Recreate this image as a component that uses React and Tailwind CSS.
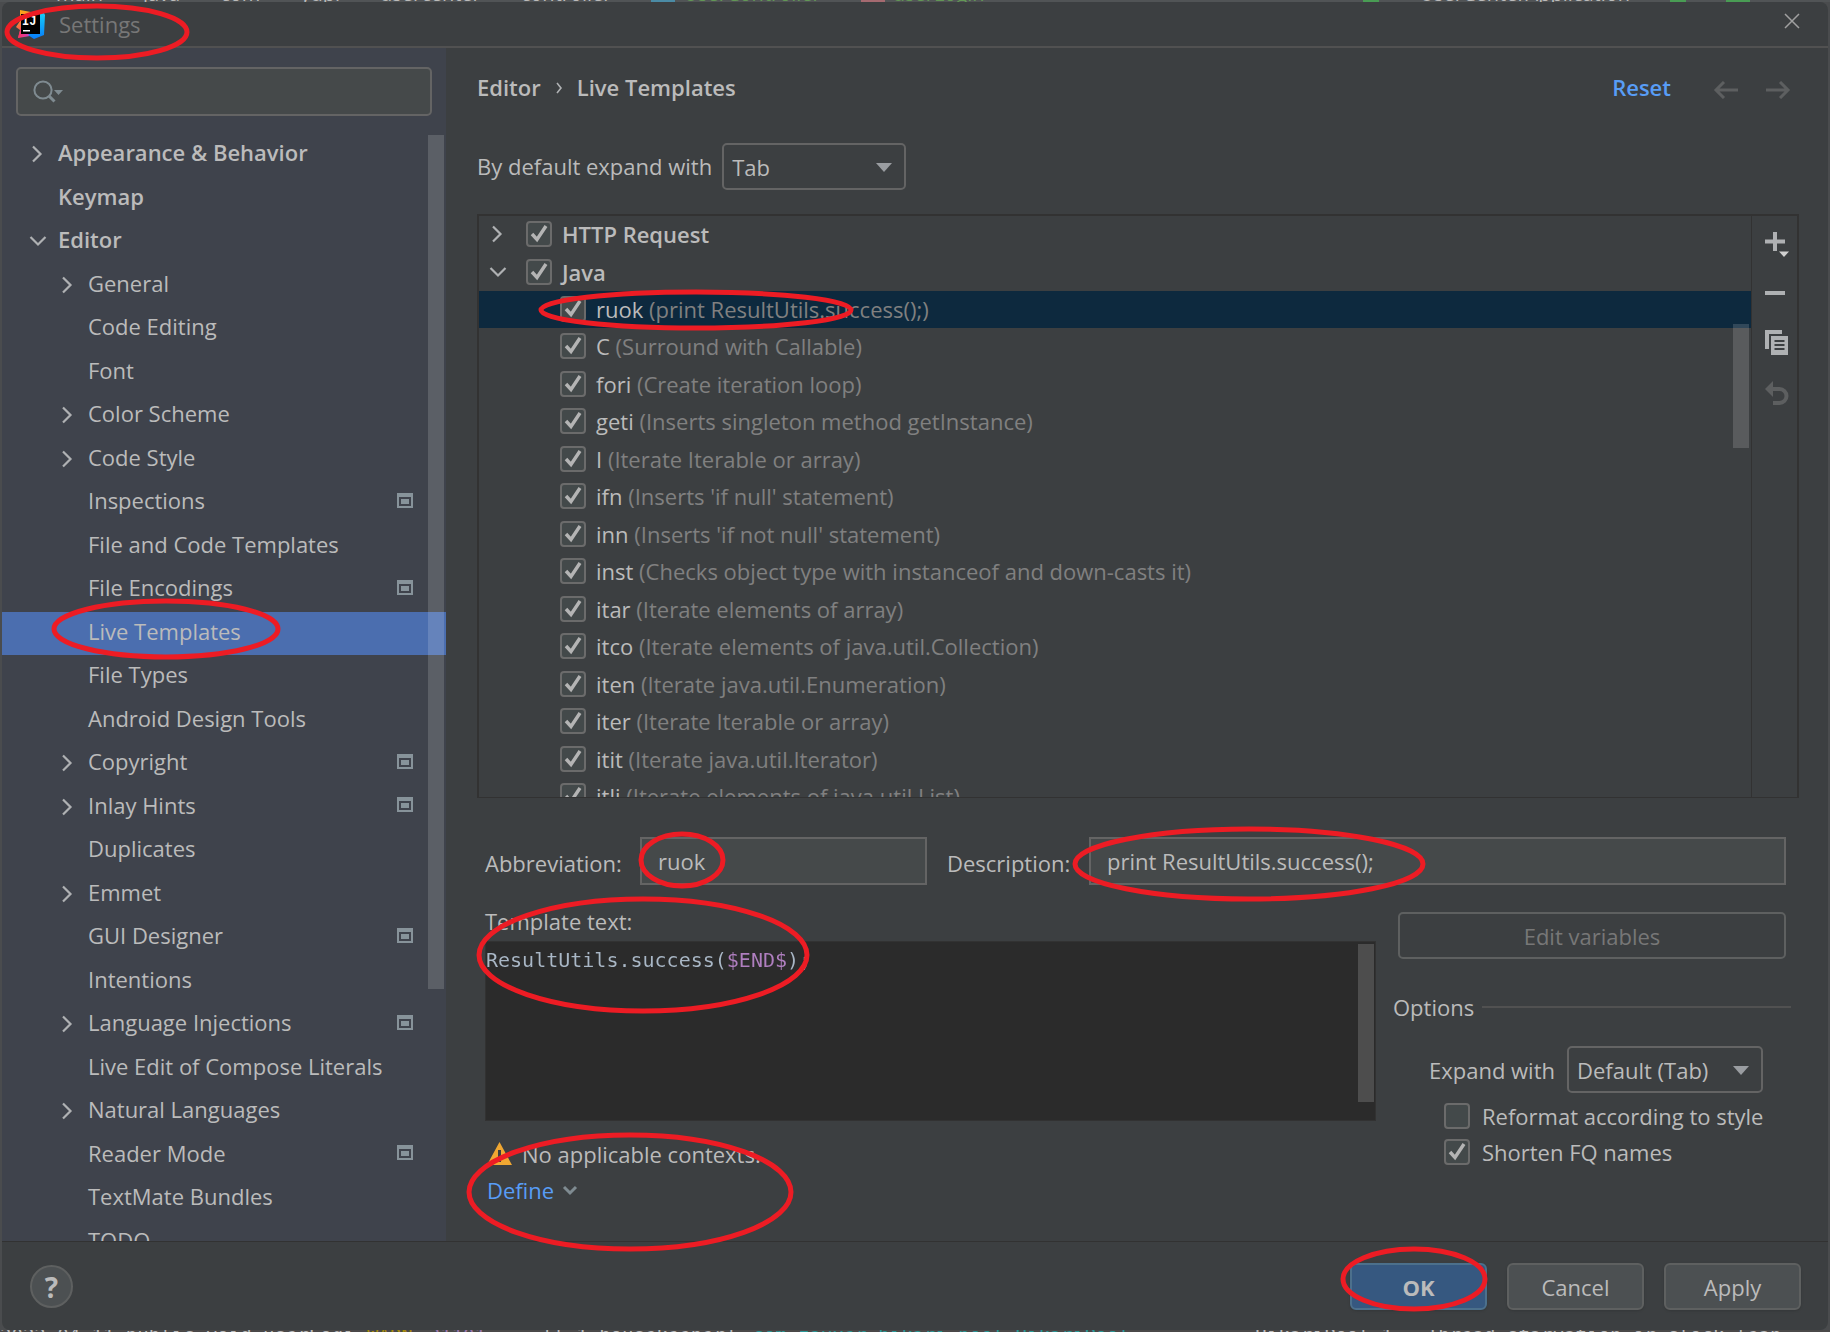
import { useState } from 'react';

const TREE = [
    { label: 'Appearance & Behavior', level: 0, arrow: 'right' },
    { label: 'Keymap', level: 0 },
    { label: 'Editor', level: 0, arrow: 'down' },
    { label: 'General', level: 1, arrow: 'right' },
    { label: 'Code Editing', level: 1 },
    { label: 'Font', level: 1 },
    { label: 'Color Scheme', level: 1, arrow: 'right' },
    { label: 'Code Style', level: 1, arrow: 'right' },
    { label: 'Inspections', level: 1, project: true },
    { label: 'File and Code Templates', level: 1 },
    { label: 'File Encodings', level: 1, project: true },
    { label: 'Live Templates', level: 1 },
    { label: 'File Types', level: 1 },
    { label: 'Android Design Tools', level: 1 },
    { label: 'Copyright', level: 1, arrow: 'right', project: true },
    { label: 'Inlay Hints', level: 1, arrow: 'right', project: true },
    { label: 'Duplicates', level: 1 },
    { label: 'Emmet', level: 1, arrow: 'right' },
    { label: 'GUI Designer', level: 1, project: true },
    { label: 'Intentions', level: 1 },
    { label: 'Language Injections', level: 1, arrow: 'right', project: true },
    { label: 'Live Edit of Compose Literals', level: 1 },
    { label: 'Natural Languages', level: 1, arrow: 'right' },
    { label: 'Reader Mode', level: 1, project: true },
    { label: 'TextMate Bundles', level: 1 },
    { label: 'TODO', level: 1 },
];

const TEMPLATES = [
    { name: 'ruok', desc: 'print ResultUtils.success();' },
    { name: 'C', desc: 'Surround with Callable' },
    { name: 'fori', desc: 'Create iteration loop' },
    { name: 'geti', desc: 'Inserts singleton method getInstance' },
    { name: 'I', desc: 'Iterate Iterable or array' },
    { name: 'ifn', desc: "Inserts 'if null' statement" },
    { name: 'inn', desc: "Inserts 'if not null' statement" },
    { name: 'inst', desc: 'Checks object type with instanceof and down-casts it' },
    { name: 'itar', desc: 'Iterate elements of array' },
    { name: 'itco', desc: 'Iterate elements of java.util.Collection' },
    { name: 'iten', desc: 'Iterate java.util.Enumeration' },
    { name: 'iter', desc: 'Iterate Iterable or array' },
    { name: 'itit', desc: 'Iterate java.util.Iterator' },
    { name: 'itli', desc: 'Iterate elements of java.util.List' },
];

// red pen marks drawn over the dialog
const MARKS = [
    [97, 32, 90, 26],
    [696, 310, 155, 18],
    [166, 629, 112, 28],
    [682, 860, 41, 26],
    [1249, 864, 174, 35],
    [643, 955, 164, 56],
    [630, 1192, 161, 57],
    [1414, 1279, 71, 30],
];

function Arrow({ dir }) {
    return (
        <svg className="size-5 shrink-0" viewBox="0 0 20 20" fill="none" stroke="#afb1b3" strokeWidth="2.2">
            {dir === 'right' && <path d="M5 2.5 12.5 10 5 17.5" />}
            {dir === 'down' && <path d="M2.5 6 10 13.5 17.5 6" />}
        </svg>
    );
}

function ProjectIcon() {
    return (
        <svg className="mb-1 ml-auto h-[15px] w-4" viewBox="0 0 16 15">
            <path fill="#87939a" fillRule="evenodd" d="M0 0h16v15H0zM2 4v9h12V4z" />
            <path fill="#87939a" d="M4 6h8v5H4z" />
        </svg>
    );
}

function Checkbox({ id, defaultChecked = false, label }) {
    return (
        <span className="relative grid size-[26px] shrink-0">
            <input
                id={id}
                type="checkbox"
                aria-label={label}
                defaultChecked={defaultChecked}
                className="peer size-[26px] appearance-none rounded-[4px] border-2 border-[#6b6b6b] bg-[#43494a]"
            />
            <svg
                className="pointer-events-none absolute inset-0 hidden size-[26px] peer-checked:block"
                viewBox="0 0 26 26"
                fill="none"
                stroke="#b4b4b4"
                strokeWidth="3.4"
            >
                <path d="M6 13 11 18.5 20 5" />
            </svg>
        </span>
    );
}

function Select({ id, options, className }) {
    return (
        <span className={`relative block ${className}`}>
            <select
                id={id}
                className="block h-[47px] w-full appearance-none rounded-[5px] border-2 border-[#646464] bg-[#3c3f41] px-2 text-[#bbbbbb]"
            >
                {options.map((o) => (
                    <option key={o}>{o}</option>
                ))}
            </select>
            <svg className="pointer-events-none absolute top-5 right-3.5 h-[9px] w-4" viewBox="0 0 16 9">
                <path fill="#9a9da1" d="M0 0h16L8 9z" />
            </svg>
        </span>
    );
}

function Logo() {
    return (
        <svg className="h-[30px] w-[30px]" viewBox="0 0 30 30">
            <defs>
                <linearGradient id="warm" x1="0" y1="0" x2="0.3" y2="1">
                    <stop offset="0" stopColor="#fdb60d" />
                    <stop offset="0.5" stopColor="#f97a3d" />
                    <stop offset="1" stopColor="#fe315d" />
                </linearGradient>
                <linearGradient id="cold" x1="0" y1="0" x2="0" y2="1">
                    <stop offset="0" stopColor="#18d5f7" />
                    <stop offset="1" stopColor="#087cfa" />
                </linearGradient>
                <linearGradient id="pink" x1="0" y1="0" x2="1" y2="0">
                    <stop offset="0" stopColor="#fe315d" />
                    <stop offset="1" stopColor="#b74af7" />
                </linearGradient>
            </defs>
            <path fill="url(#warm)" d="M4 1 15 3 18 15 10 26 2 29 4 21 0 18 4 12z" />
            <path fill="url(#pink)" d="M2 29 5 18 20 22 14 27z" />
            <path fill="#fe5a6e" d="M13 3 19 4 17 10z" />
            <path fill="url(#cold)" d="M20 6 27 2 29 6 28 26 18 30 12 26 22 20z" />
            <path fill="#000" d="M5 5h19v20H5z" />
            <text x="6" y="16" fill="#fff" className="font-['Liberation_Mono',monospace] text-[12px] font-bold">IJ</text>
            <path fill="#fff" d="M7 21h7v1.6H7z" />
        </svg>
    );
}

function Sidebar() {
    const [selected, setSelected] = useState('Live Templates');

    return (
        <aside className="flex w-[444px] shrink-0 flex-col bg-[#3f434c] pt-[19px]">
            <div className="relative mx-3.5">
                <input
                    type="text"
                    aria-label="Search settings"
                    className="block h-[49px] w-full rounded-[5px] border-2 border-[#646464] bg-[#45494a] pl-16 text-[#bbbbbb]"
                />
                <svg className="pointer-events-none absolute top-3 left-4 h-6 w-8" viewBox="0 0 32 24" fill="none" stroke="#7f8b91">
                    <circle cx="11" cy="11" r="8.6" strokeWidth="2" />
                    <path strokeWidth="3" d="m17 17 5.5 5.5" />
                    <path fill="#7f8b91" stroke="none" d="M22 11h9l-4.500 5z" />
                </svg>
            </div>
            <nav className="relative mt-[17px] h-0 grow overflow-hidden">
                {TREE.map((item) => (
                    <button
                        key={item.label}
                        onClick={() => setSelected(item.label)}
                        className={`flex w-full items-center gap-2.5 pr-[33px] pb-0.5 text-left odd:h-11 even:h-[43px] ${
                            item.level === 0 ? 'pl-[26px] font-semibold' : 'pl-14'
                        } ${item.label === selected ? 'bg-[#4b6eaf]' : ''}`}
                    >
                        <Arrow dir={item.arrow} />
                        <span className="pb-1">{item.label}</span>
                        {item.project && <ProjectIcon />}
                    </button>
                ))}
                <div className="absolute top-0.5 right-0.5 h-[854px] w-4 bg-white/15" />
            </nav>
        </aside>
    );
}

function TemplateList() {
    const [selected, setSelected] = useState('ruok');

    return (
        <div className="mt-6 flex h-0 grow border-2 border-b border-[#323232]">
            <div className="relative grow overflow-hidden">
                <div className="flex h-[38px] items-center pb-0.5 pl-[9px]">
                    <Arrow dir="right" />
                    <label className="ml-[18px] flex items-center gap-2.5 font-semibold">
                        <Checkbox defaultChecked />
                        HTTP Request
                    </label>
                </div>
                <div className="flex h-[37px] items-center pb-0.5 pl-[9px]">
                    <Arrow dir="down" />
                    <label className="ml-[18px] flex items-center gap-2.5 font-semibold">
                        <Checkbox defaultChecked />
                        Java
                    </label>
                </div>
                {TEMPLATES.map((t) => (
                    <div
                        key={t.name}
                        onClick={() => setSelected(t.name)}
                        className={`flex items-center gap-2.5 pb-0.5 pl-[81px] odd:h-[37px] even:h-[38px] ${
                            t.name === selected ? 'bg-[#0d293e]' : ''
                        }`}
                    >
                        <Checkbox defaultChecked label={t.name} />
                        <span>
                            {t.name} <span className="text-[#808080]">({t.desc})</span>
                        </span>
                    </div>
                ))}
                <div className="absolute top-[108px] right-0.5 h-[124px] w-4 bg-white/15" />
            </div>
            <div className="flex w-[46px] flex-col items-center gap-6 border-l border-[#323232] pt-4 pl-1">
                <button aria-label="Add">
                    <svg className="h-[26px] w-6" viewBox="0 0 24 26">
                        <path fill="#afb1b3" d="M8 0h4v7.500h8v4h-8V19H8v-7.500H0v-4h8z" />
                        <path fill="#d0d0d0" d="M14 19.500h10L19 25z" />
                    </svg>
                </button>
                <button aria-label="Remove">
                    <svg className="h-6 w-6" viewBox="0 0 24 24">
                        <path fill="#afb1b3" d="M0 9h20v4H0z" />
                    </svg>
                </button>
                <button aria-label="Duplicate">
                    <svg className="h-[26px] w-6" viewBox="0 0 24 26">
                        <path fill="#afb1b3" d="M0 0h17v4H4v15H0z" />
                        <path fill="#afb1b3" fillRule="evenodd" d="M6 6h17v19H6zM9.500 10v2h10v-2zM9.500 14v2h10v-2zM9.500 18v2h10v-2z" />
                    </svg>
                </button>
                <button aria-label="Revert" disabled>
                    <svg className="h-[26px] w-6" viewBox="0 0 24 26">
                        <path fill="#5d5f60" d="M0 9 8 1v16z" />
                        <path fill="none" stroke="#5d5f60" strokeWidth="4" d="M7 9h7.500a7 7 0 0 1 0 14H8" />
                    </svg>
                </button>
            </div>
        </div>
    );
}

function TemplateForm() {
    return (
        <div className="mt-[39px] pl-2">
            <div className="flex items-center pr-[13px]">
                <label htmlFor="abbr" className="w-[155px] pt-1">Abbreviation:</label>
                <input
                    id="abbr"
                    type="text"
                    defaultValue="ruok"
                    className="h-12 w-[287px] border-2 border-[#646464] bg-[#45494a] px-4 text-[#bbbbbb]"
                />
                <label htmlFor="desc" className="ml-5 w-[142px] pt-1">Description:</label>
                <input
                    id="desc"
                    type="text"
                    defaultValue="print ResultUtils.success();"
                    className="h-12 min-w-0 grow border-2 border-[#646464] bg-[#45494a] px-4 text-[#bbbbbb]"
                />
            </div>
            <div className="flex">
                <div className="flex min-w-0 grow flex-col pt-5">
                    <label htmlFor="code" className="leading-8">Template text:</label>
                    <div className="relative mt-1 border border-[#323232] bg-[#2b2b2b]">
                        {/* the $END$ variable sits in columns 20-25 */}
                        <textarea
                            id="code"
                            spellCheck="false"
                            defaultValue="ResultUtils.success($END$);"
                            className="block h-[178px] w-full resize-none bg-[linear-gradient(90deg,#a9b7c6_20ch,#b07fc0_20ch,#b07fc0_25ch,#a9b7c6_25ch)] bg-clip-text pt-1 font-['DejaVu_Sans_Mono',monospace] text-[20px] leading-7 text-transparent caret-white outline-none"
                        />
                        <div className="absolute top-0.5 right-px h-[158px] w-4 bg-[#4d4d4d]" />
                    </div>
                    <div className="mt-[18px] flex h-[30px] items-center gap-2.5">
                        <svg className="ml-0.5 h-6 w-[25px]" viewBox="0 0 25 24">
                            <path fill="#f0a732" fillRule="evenodd" d="M12.500 0 25 23H0zM11 8v7h3V8zM11 17v3h3v-3z" />
                        </svg>
                        No applicable contexts.
                    </div>
                    <button className="mt-1.5 flex h-[30px] items-center gap-2 pl-0.5 text-[#589df6]">
                        Define
                        <svg className="size-4" viewBox="0 0 16 16" fill="none" stroke="#7f8b91" strokeWidth="3">
                            <path d="m2 5 6 6 6-6" />
                        </svg>
                    </button>
                </div>
                <div className="ml-[17px] flex w-[406px] shrink-0 flex-col pt-[27px]">
                    <button
                        disabled
                        className="mr-[13px] ml-[5px] h-[47px] rounded-[5px] border-2 border-[#5e6060] text-[#777777]"
                    >
                        Edit variables
                    </button>
                    <fieldset className="mt-8">
                        <legend className="flex w-full items-center gap-2 pr-2 leading-8">
                            Options
                            <span className="h-0.5 grow bg-[#515151]" />
                        </legend>
                        <div className="mt-[23px] flex items-center justify-end gap-3 pr-9">
                            <label htmlFor="expand">Expand with</label>
                            <Select id="expand" options={['Default (Tab)', 'Tab', 'Enter', 'Space', 'None']} className="w-[196px]" />
                        </div>
                        <div className="mt-2 ml-[51px] flex flex-col gap-1.5">
                            <label className="flex h-[30px] items-center gap-3">
                                <Checkbox />
                                Reformat according to style
                            </label>
                            <label className="flex h-[30px] items-center gap-3">
                                <Checkbox defaultChecked />
                                Shorten FQ names
                            </label>
                        </div>
                    </fieldset>
                </div>
            </div>
        </div>
    );
}

export default function App() {
    return (
        <div className="relative flex h-screen flex-col overflow-hidden bg-[#4a4c4e] font-['Open_Sans','Noto_Sans_CJK_SC',sans-serif] text-[22px] leading-[30px] text-[#bbbbbb]">
            {/* editor breadcrumbs peeking out above the dialog */}
            <div className="flex h-0.5 shrink-0 items-end gap-10 overflow-hidden bg-[#515456] pr-20 pl-14 text-xl leading-4" aria-hidden="true">
                <span>main</span>
                <span>java</span>
                <span>com</span>
                <span>yupi</span>
                <span>usercenter</span>
                <span>controller</span>
                <span className="flex items-end gap-2 text-[#629755]">
                    <i className="h-0.5 w-6 bg-[#4b8ba5]" />
                    UserController
                </span>
                <span className="flex items-end gap-2 text-[#629755]">
                    <i className="h-0.5 w-6 bg-[#a56a70]" />
                    userLogin
                </span>
                <i className="ml-auto h-0.5 w-4 bg-[#499c54]" />
                <span>UserCenterApplication</span>
                <i className="h-0.5 w-4 bg-[#499c54]" />
                <i className="h-0.5 w-6 bg-[#499c54]" />
            </div>
            <div className="mx-0.5 flex min-h-0 grow flex-col overflow-hidden rounded-lg bg-[#3c3f41]">
                <header className="flex h-[46px] shrink-0 items-center border-b-2 border-[#515151] pl-3.5">
                    <Logo />
                    <h1 className="ml-[13px]  text-[#777777]">Settings</h1>
                    <button aria-label="Close" className="mr-6 ml-auto pb-1.5">
                        <svg className="size-6" viewBox="0 0 24 24" fill="none" stroke="#a0a0a0" strokeWidth="1.500">
                            <path d="m5 5 14 14M19 5 5 19" />
                        </svg>
                    </button>
                </header>
                <div className="flex min-h-0 grow">
                    <Sidebar />
                    <main className="flex min-w-0 grow flex-col pr-[29px] pl-[31px]">
                        <div className="flex h-20 items-center pr-2 font-semibold">
                            <span className="pb-0.5">Editor</span>
                            <svg className="mx-3.5 h-3 w-2" viewBox="0 0 8 12" fill="none" stroke="#afb1b3" strokeWidth="1.600">
                                <path d="m2 1 4 5-4 5" />
                            </svg>
                            <h2 className="pb-0.5">Live Templates</h2>
                            <a href="#reset" className="ml-auto pb-0.5 text-[#589df6]">Reset</a>
                            <button aria-label="Back" disabled className="ml-[42px] pt-1">
                                <svg className="h-[18px] w-[25px]" viewBox="0 0 25 18" fill="none" stroke="#5d5f60" strokeWidth="3">
                                    <path d="M25 9H3M11 1 3 9l8 8" />
                                </svg>
                            </button>
                            <button aria-label="Forward" disabled className="ml-7 pt-1">
                                <svg className="h-[18px] w-[25px]" viewBox="0 0 25 18" fill="none" stroke="#5d5f60" strokeWidth="3">
                                    <path d="M0 9h22M14 1l8 8-8 8" />
                                </svg>
                            </button>
                        </div>
                        <div className="mt-[15px] flex items-center gap-2.5">
                            <label htmlFor="default-expand" className="pb-0.5">By default expand with</label>
                            <Select id="default-expand" options={['Tab', 'Enter', 'Space', 'None']} className="w-[184px]" />
                        </div>
                        <TemplateList />
                        <TemplateForm />
                        <div className="h-9 shrink-0" />
                    </main>
                </div>
                <footer className="flex shrink-0 items-center gap-5 border-t border-[#323232] pt-[21px] pr-[27px] pb-5 pl-7">
                    <button
                        aria-label="Help"
                        className="mr-auto size-[43px] rounded-full border-2 border-[#5e6060] bg-[#4c5052] text-[28px] leading-9 font-bold"
                    >
                        ?
                    </button>
                    <button className="h-[47px] w-[137px] rounded-[6px] border-2 border-[#4c708c] bg-[#365880] font-bold shadow-sm">OK</button>
                    <button className="h-[47px] w-[137px] rounded-[6px] border-2 border-[#5e6060] bg-[#4c5052] shadow-sm">Cancel</button>
                    <button className="h-[47px] w-[137px] rounded-[6px] border-2 border-[#5e6060] bg-[#4c5052] shadow-sm">Apply</button>
                </footer>
            </div>
            {/* console output below the dialog */}
            <div
                className="flex h-0.5 shrink-0 gap-4 overflow-hidden bg-[#4a4848] font-['DejaVu_Sans_Mono',monospace] text-[19px] leading-[10px] whitespace-pre"
                aria-hidden="true"
            >
                <span className="w-[351px] overflow-hidden">2022-04-11 public void userLogin</span>
                <span className="text-[#a68a0d]">WARN</span>
                <span className="text-[#9876aa]">31101</span>
                <span className="ml-10">[l-1 housekeeper]</span>
                <span className="w-[464px] text-[#299999]">com.zaxxer.hikari.pool.HikariPool</span>
                <span>: HikariPool-1 - Thread starvation or clock leap</span>
            </div>
            <svg className="pointer-events-none absolute top-0 left-0 h-[1332px] w-[1830px]" fill="none" stroke="#ed1c24" strokeWidth="5">
                {MARKS.map(([cx, cy, rx, ry]) => (
                    <ellipse key={cx} cx={cx} cy={cy} rx={rx} ry={ry} />
                ))}
            </svg>
        </div>
    );
}
